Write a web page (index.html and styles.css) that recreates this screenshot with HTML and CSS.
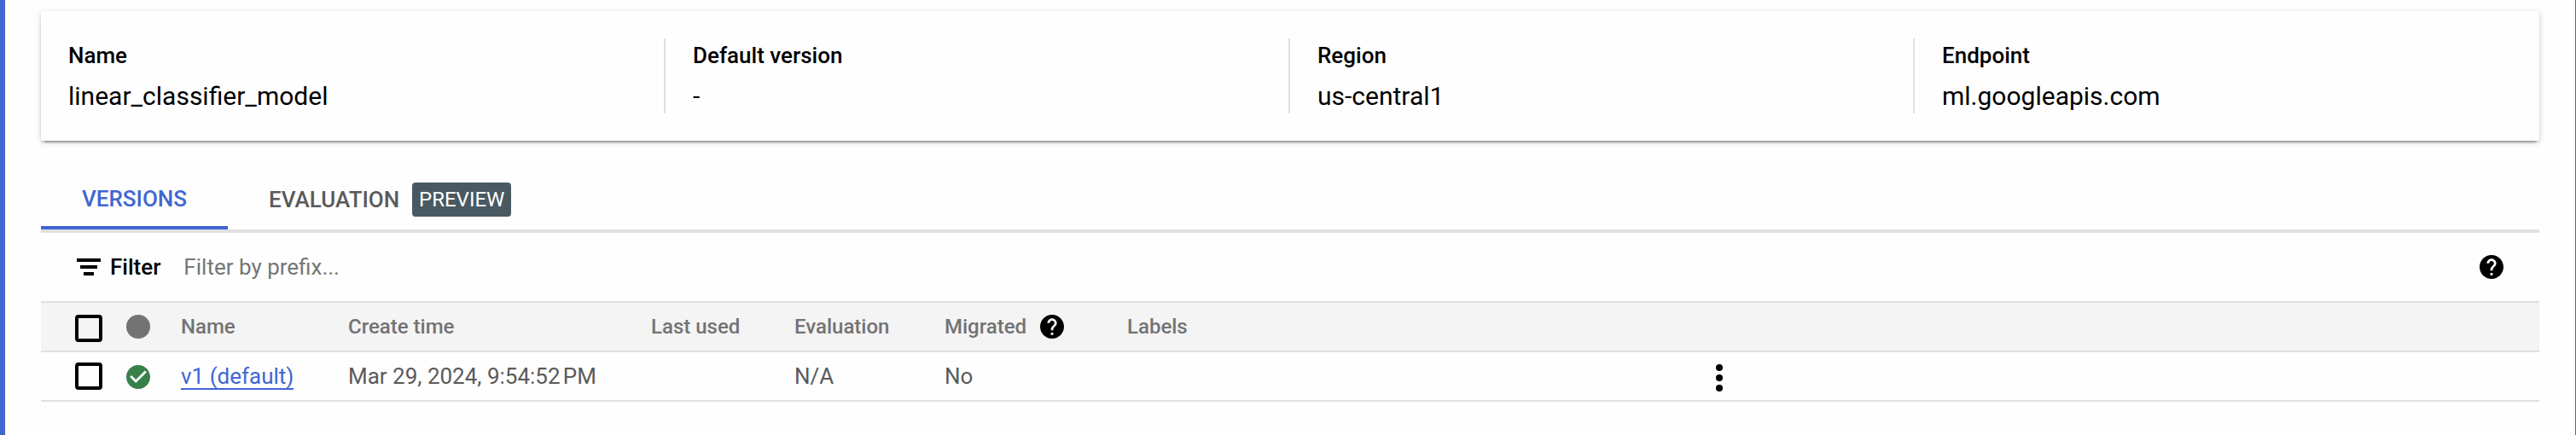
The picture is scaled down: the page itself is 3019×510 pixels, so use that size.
FILE: index.html
```html
<!DOCTYPE html>
<html lang="en">
<head>
<meta charset="utf-8">
<title>linear_classifier_model</title>
<link rel="stylesheet" href="styles.css">
</head>
<body>
<main class="page">
  <section class="summary">
    <div class="fact"><div class="fact-label">Name</div><div class="fact-value">linear_classifier_model</div></div>
    <div class="fact"><div class="fact-label">Default version</div><div class="fact-value">-</div></div>
    <div class="fact"><div class="fact-label">Region</div><div class="fact-value">us-central1</div></div>
    <div class="fact"><div class="fact-label">Endpoint</div><div class="fact-value">ml.googleapis.com</div></div>
  </section>

  <nav class="tabs">
    <a class="tab tab-active">VERSIONS</a>
    <a class="tab tab-evaluation"><span>EVALUATION</span><span class="badge">PREVIEW</span></a>
  </nav>

  <div class="filter">
    <svg class="filter-icon" viewBox="0 0 28 20"><path d="M0 0h28v4H0zM4 8h20v4H4zM8 16h12v4H8z"/></svg>
    <span class="filter-label">Filter</span>
    <span class="filter-hint">Filter by prefix...</span>
    <svg class="help" viewBox="2 2 20 20"><path d="M12 2C6.48 2 2 6.48 2 12s4.48 10 10 10 10-4.48 10-10S17.52 2 12 2zm1 17h-2v-2h2v2zm2.07-7.75l-.9.92C13.45 12.9 13 13.5 13 15h-2v-.5c0-1.1.45-2.1 1.17-2.83l1.24-1.26c.37-.36.59-.86.59-1.41 0-1.1-.9-2-2-2s-2 .9-2 2H8c0-2.21 1.79-4 4-4s4 1.79 4 4c0 .88-.36 1.68-.93 2.25z"/></svg>
  </div>

  <div class="table">
    <div class="row head">
      <div><span class="checkbox"></span></div>
      <div><span class="status-dot"></span></div>
      <div>Name</div>
      <div>Create time</div>
      <div>Last used</div>
      <div>Evaluation</div>
      <div class="with-help">Migrated
        <svg class="help" viewBox="2 2 20 20"><path d="M12 2C6.48 2 2 6.48 2 12s4.48 10 10 10 10-4.48 10-10S17.52 2 12 2zm1 17h-2v-2h2v2zm2.07-7.75l-.9.92C13.45 12.9 13 13.5 13 15h-2v-.5c0-1.1.45-2.1 1.17-2.83l1.24-1.26c.37-.36.59-.86.59-1.41 0-1.1-.9-2-2-2s-2 .9-2 2H8c0-2.21 1.79-4 4-4s4 1.79 4 4c0 .88-.36 1.68-.93 2.25z"/></svg>
      </div>
      <div>Labels</div>
      <div></div>
    </div>
    <div class="row body">
      <div><span class="checkbox"></span></div>
      <div><svg class="status-ok" viewBox="2 2 20 20"><path d="M12 2C6.48 2 2 6.48 2 12s4.48 10 10 10 10-4.48 10-10S17.52 2 12 2zm-2 15l-5-5 1.41-1.41L10 14.17l7.59-7.59L19 8l-9 9z"/></svg></div>
      <div><a class="link">v1 (default)</a></div>
      <div>Mar 29, 2024, 9:54:52&#8239;PM</div>
      <div></div>
      <div>N/A</div>
      <div>No</div>
      <div></div>
      <div><svg class="more" viewBox="0 0 8 32"><circle cx="4" cy="4" r="4"/><circle cx="4" cy="16" r="4"/><circle cx="4" cy="28" r="4"/></svg></div>
    </div>
  </div>
</main>
</body>
</html>
```
FILE: styles.css
```css
* { box-sizing: border-box; }

body {
  margin: 0;
  background: #fefefe;
  color: #000;
  font-family: Roboto, "Noto Sans", sans-serif;
  font-size: 26px;
}

svg { display: block; flex: none; }

.page {
  height: 510px;
  padding: 13px 42px 0;
  border-left: 6px solid #4166d2;
  border-right: 1px solid #4166d2;
  overflow: hidden;
}

.summary {
  display: grid;
  grid-template-columns: repeat(4, 732px);
  height: 152px;
  padding: 32px 0;
  border-radius: 1px;
  background: #fefefe;
  box-shadow: 0 6px 2px -4px rgba(0, 0, 0, .24), 0 2px 3px rgba(0, 0, 0, .16), 0 2px 10px rgba(0, 0, 0, .12);
}

.fact {
  height: 88px;
  padding: 4px 0 0 32px;
  border-right: 2px solid #e0e0e0;
}

.fact:last-child { border-right: 0; }

.fact-label {
  font-weight: 500;
  line-height: 32px;
}

.fact-value {
  margin-top: 12px;
  font-size: 30px;
  line-height: 40px;
}

.tabs {
  display: flex;
  height: 76px;
  margin-top: 32px;
  border-bottom: 4px solid #e0e0e0;
  font-weight: 500;
}

.tab {
  display: flex;
  align-items: center;
  height: 72px;
}

.tab-active {
  width: 219px;
  padding: 4px 0 0 48px;
  border-bottom: 4px solid #4166d2;
  color: #4166d2;
}

.tab-evaluation {
  padding: 2px 0 0 48px;
  color: #5a5a5a;
}

.badge {
  width: 116px;
  height: 40px;
  margin-left: 15px;
  border-radius: 4px;
  background: #495962;
  color: #fff;
  font-size: 24px;
  font-weight: 400;
  line-height: 40px;
  text-align: center;
}

.filter {
  display: flex;
  align-items: center;
  height: 80px;
  padding: 0 42px;
}

.filter-icon {
  width: 28px;
  height: 20px;
}

.filter-label {
  margin-left: 11px;
  font-weight: 500;
}

.filter-hint {
  margin-left: 27px;
  color: #767676;
}

.help {
  width: 28px;
  height: 28px;
}

.filter .help { margin-left: auto; }

.row {
  display: grid;
  grid-template-columns: 60px 64px 196px 355px 168px 176px 214px 690px 1fr;
  align-items: center;
  height: 58px;
  padding-left: 40px;
  border-bottom: 2px solid #e0e0e0;
}

.head {
  height: 60px;
  border-top: 2px solid #e0e0e0;
  background: #f4f4f4;
  color: #737373;
  font-size: 24px;
  font-weight: 500;
}

.body { color: #5a5a5a; }

.checkbox {
  display: block;
  width: 32px;
  height: 32px;
  border: 4px solid #000;
  border-radius: 4px;
}

.head .checkbox { margin-top: 4px; }

.status-dot {
  display: block;
  width: 28px;
  height: 28px;
  border-radius: 50%;
  background: #737373;
}

.status-ok {
  width: 28px;
  height: 28px;
  margin-top: 2px;
  fill: #38804a;
}

.with-help {
  display: flex;
  align-items: center;
  gap: 16px;
}

.link {
  display: inline-block;
  margin-top: 2px;
  border-bottom: 2px solid #4166d2;
  color: #4166d2;
  line-height: 28px;
}

.more {
  width: 8px;
  height: 32px;
  margin-top: 4px;
}
```
